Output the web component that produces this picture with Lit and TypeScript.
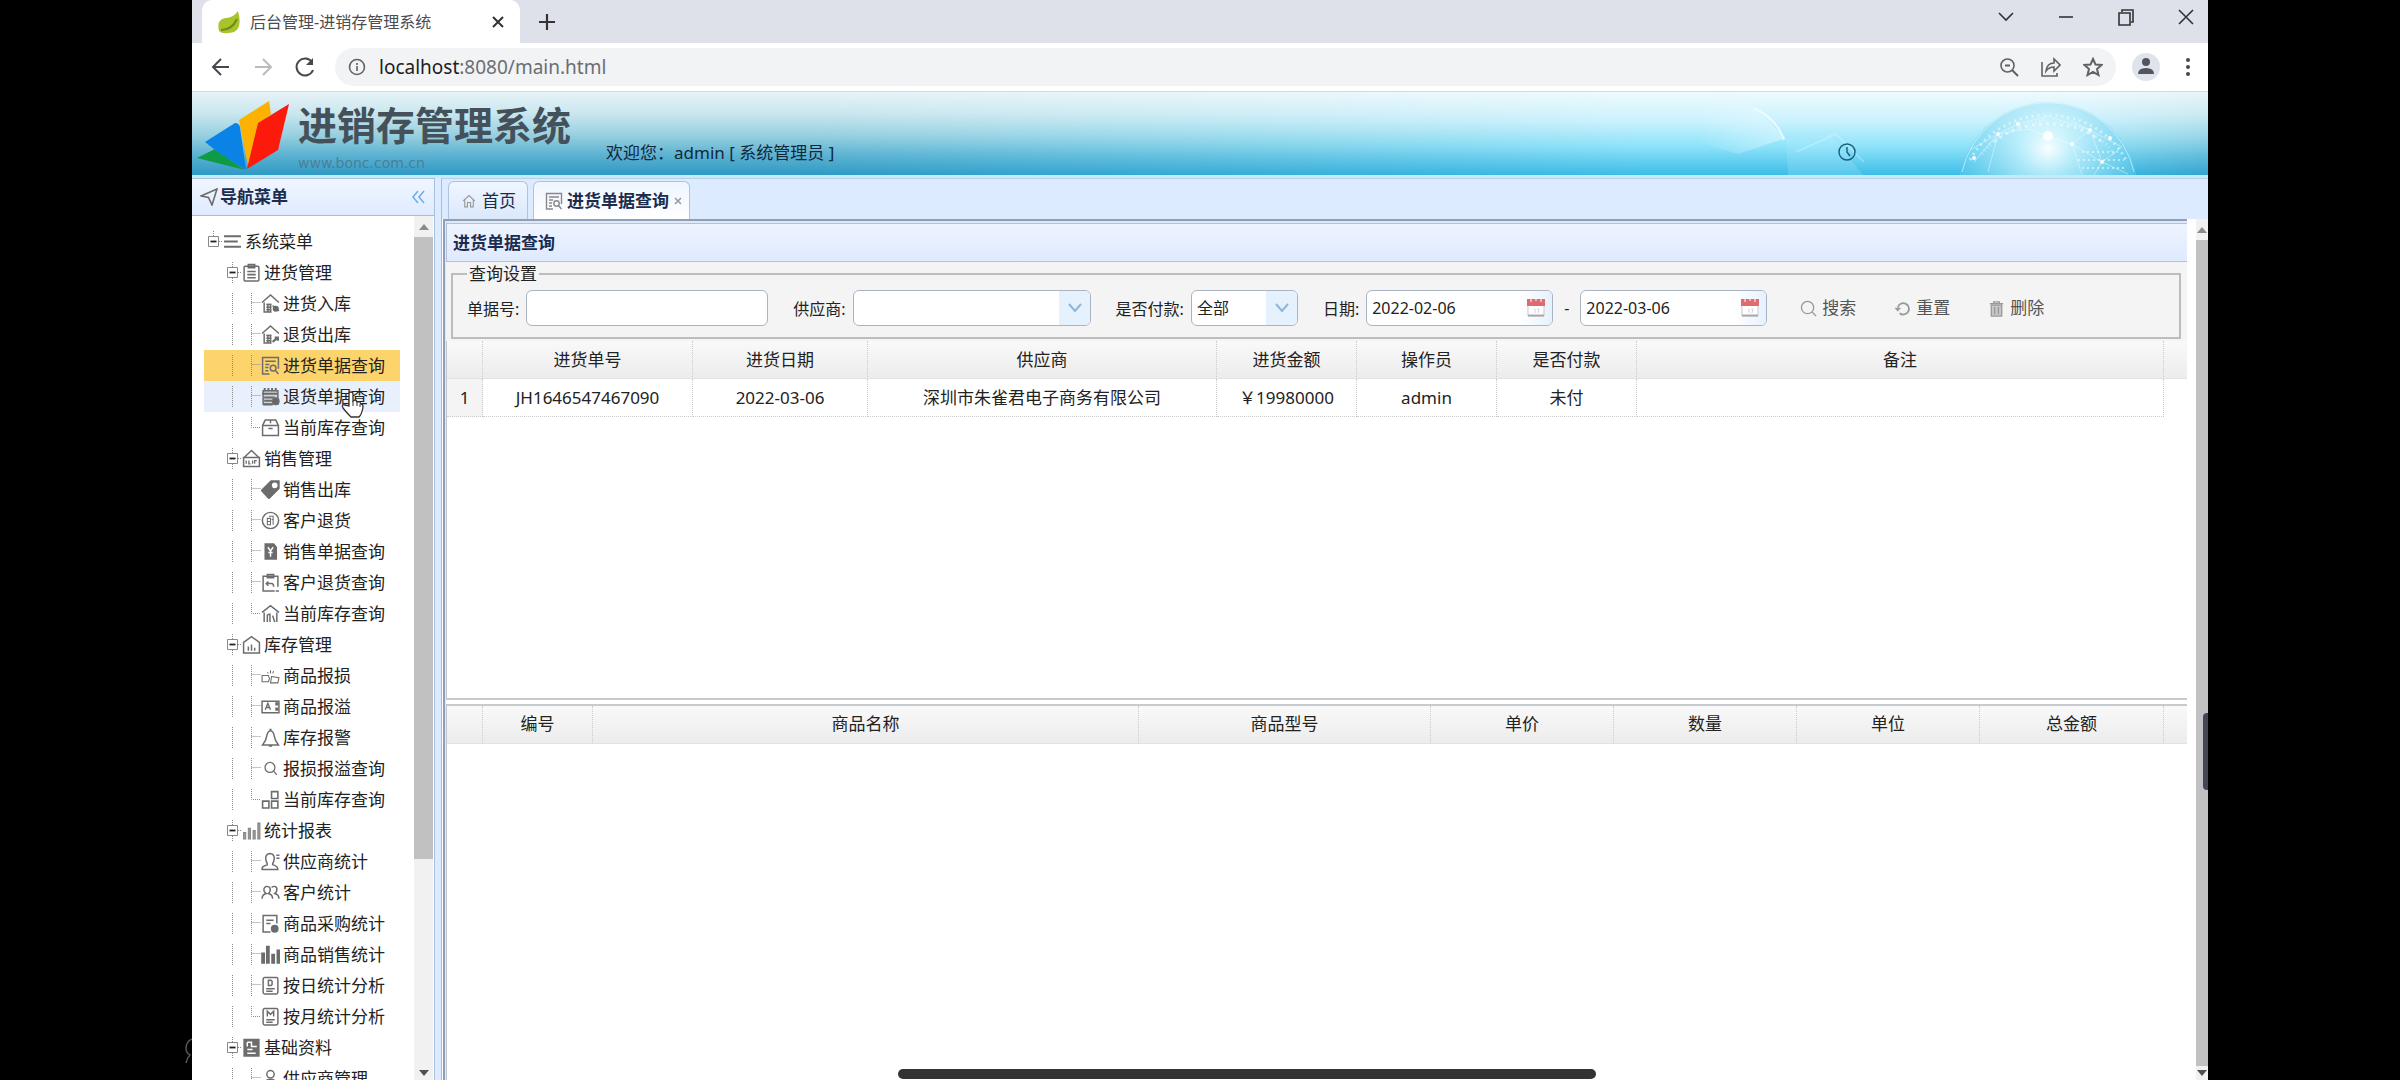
import { LitElement, html, css, svg, type TemplateResult } from "lit";
import { customElement, property, state } from "lit/decorators.js";

/* Glyphs drawn on an 18 x 18 grid; strokes use the current colour. */
const glyphs: Record<string, TemplateResult> = {
  send: svg`<path d="M1 8 L17 1 L12 17 L8.500 9.500 Z" stroke-width="1.600"/>`,
  list: svg`<path d="M1 4h16M1 9h13M1 14h16" stroke-width="1.800"/>`,
  clipboard: svg`<rect x="2" y="3" width="14" height="14" rx="1"/><path d="M6 1.500h6v3h-6zM5 8h8M5 11h8M5 14h8" stroke-width="1.500"/>`,
  houseIn: svg`<path d="M1 8 9 1l8 7M3 8v9h7M5 10h5M5 12.500h5M5 15h5M6.500 9v8M9 9v8"/><circle cx="14" cy="14" r="2.200" fill="currentColor"/><path d="m11 11 6 5"/>`,
  houseOut: svg`<path d="M1 8 9 1l8 7M3 8v9h7M5 10h5M5 12.500h5M5 15h5M6.500 9v8M9 9v8"/><path d="m11 16 5-4M13 12h3v3" stroke-width="2"/>`,
  docSearch: svg`<path d="M8 17H1.500V1.500h15V9M4 5h10M4 8h4M4 11h3M4 14h3" /><circle cx="11.500" cy="11.500" r="2.700"/><path d="m13.500 13.500 3 3.500M16.500 9v3" />`,
  calendar: svg`<path d="M2 3.500h14V16H2z" fill="currentColor" fill-opacity=".2"/><path d="M3.500 1v3M7 1v3M10.500 1v3M14 1v3M1 6.500h15M3 10h10M3 13h8M2 16.500h9" stroke-width="1.900"/><circle cx="14" cy="13.500" r="3" fill="#666"/>`,
  box: svg`<path d="M1.500 7 4 2h10l2.500 5v9.500h-15zM1.500 7h15M9 2v3M7 10h4" />`,
  saleSign: svg`<path d="M1.500 8h15v8.500h-15zM2 8l7-6.500L16 8"/><path d="M4 11v3M6.500 11v3h1.500M10 11v3M12 14v-3h2" stroke-width="1.200"/>`,
  tag: svg`<path d="M9.500 1H17v7L7.500 17.500.5 10z" fill="currentColor"/><circle cx="13" cy="5" r="2" fill="#fff" stroke="#fff"/>`,
  coin: svg`<circle cx="9" cy="9" r="7.700"/><path d="M6 7h3v6H6zM7.500 5h4v8M10 8h2M6 10h3" stroke-width="1"/>`,
  billFill: svg`<path d="M4 2h8l2.500 3v11H4z" fill="currentColor"/><path d="m6.500 5 2.500 3.500L11.500 5M9 8.500V14M7 10h4" stroke="#fff"/>`,
  boardBack: svg`<path d="M13 17H2V3h14v10M6 1.500h6v3H6zM7 8 5 10l2 2M5.500 10H10q2 0 2 3M14 17h3"/>`,
  homeBars: svg`<path d="M1 8 9 1.500 17 8M3 8v9M15 8v9M6 10v7M8.500 9v8M11 11l2 6M6 10h2.500"/>`,
  homeChart: svg`<path d="M1.500 7 9 1.500 16.500 7v10h-15zM6 11v4M9 9v6M12 12v3"/>`,
  broken: svg`<path d="M1 9h6l1 3-1 3H1zM10 10l7 1-1 5H9zM6 6l1 1M9 4v3M12 5l-1 2" stroke-width="1"/>`,
  label: svg`<path d="M1 4h16v11H1z"/><path d="m4 12 2.500-6L9 12M5 10h3" stroke-width="1.300"/><path d="M15 5v9" stroke-width="3" stroke-dasharray="3 2"/>`,
  bell: svg`<path d="M9 2.500q3 1 3.500 5 .500 4 4 8.500h-15q3.500-4.500 4-8.500Q6 3.500 9 2.500zM8 1.500h2M7.500 17h3"/>`,
  search: svg`<circle cx="8.500" cy="8" r="4.700" stroke-width="1.200"/><path d="m12 11.500 3 3.500" stroke-width="1.200"/>`,
  blocks: svg`<path d="M10 1.500h6V8h-6zM1.500 10.500h6V17h-6zM10 10.500h6V17h-6z" stroke-width="1.500"/>`,
  bars: svg`<path d="M1.500 11h2v6h-2zM6 7h2v10H6zM10.500 9h2v8h-2zM15 2h2v15h-2z" fill="#999" stroke="#888" stroke-width="1"/>`,
  person: svg`<path d="M1 16.500q-.500-3 5-4.500 0-1.500-1-3-2-7 3.500-7.500 5.500.500 3.500 7.500-1 1.500-1 3 5 1.500 5 4.500zM14.500 3h3M14.500 6h3"/>`,
  people: svg`<path d="M1 15q0-4 4-5-3-2-2-5 1.500-3 5-1 2 3-1 6 4 1 4 5M10 4q4-2 5 1 .500 3-2 5 4 1 4 5"/>`,
  docPie: svg`<path d="M9 17H2V1.500h13V9M5 6h7M5 9h4"/><circle cx="13" cy="14" r="3" fill="currentColor"/>`,
  barsFill: svg`<path d="M1 8h2v9H1zM5.500 1.500h2V17h-2zM10.500 9h2v8h-2zM15.500 5h2v12h-2z" fill="currentColor" stroke-width="1.600"/>`,
  dayDoc: svg`<rect x="2" y="1.500" width="14" height="15.500" rx="1.500"/><path d="M7 4v5h2.500l1-1V5l-1-1zM5 12h8M5 14.500h6" />`,
  monthDoc: svg`<rect x="2" y="1.500" width="14" height="15.500" rx="1.500"/><path d="M6 9V4l3 3 3-3v5M5 12h8M5 14.500h6" />`,
  ledger: svg`<path d="M2 1.500h14v15.500H2z" fill="currentColor"/><path d="M5 4h4v4h5M5 11h5M5 14.500h8M5 4v4" stroke="#fff"/>`,
  user: svg`<circle cx="9" cy="5" r="3.500"/><path d="M2 17q0-7 7-7t7 7z"/>`,
  home: svg`<path d="M1.500 9 9 2l7.500 7M3.500 8v8.500H7V11h4v5.500h3.500V8"/>`,
  reset: svg`<path d="M4 8a6 6 0 1 1 2 6" stroke-width="1.800"/><path d="M1 8.500h6L4 12z" fill="currentColor" stroke-width=".5"/>`,
  trash: svg`<path d="M2 4h14M6 4V2h6v2" /><path d="M3.500 5.500h11V17h-11z" fill="currentColor" fill-opacity=".5"/><path d="M7 7.500V15M11 7.500V15"/>`,
  finder: svg`<circle cx="8" cy="8" r="6.500"/><path d="m13 13 4 4"/>`,
  clock: svg`<circle cx="9" cy="9" r="8"/><path d="M9 4v5l3 4" />`,
};

const icon = (name: string, cls = "ico") =>
  html`<svg class=${cls} viewBox="0 0 18 18" fill="none" stroke="currentColor" stroke-width="1.400" aria-hidden="true">${glyphs[name]}</svg>`;

interface MenuGroup { label: string; icon: string; items: [string, string][] }

const menu: MenuGroup[] = [
  { label: "进货管理", icon: "clipboard", items: [["进货入库", "houseIn"], ["退货出库", "houseOut"], ["进货单据查询", "docSearch"], ["退货单据查询", "calendar"], ["当前库存查询", "box"]] },
  { label: "销售管理", icon: "saleSign", items: [["销售出库", "tag"], ["客户退货", "coin"], ["销售单据查询", "billFill"], ["客户退货查询", "boardBack"], ["当前库存查询", "homeBars"]] },
  { label: "库存管理", icon: "homeChart", items: [["商品报损", "broken"], ["商品报溢", "label"], ["库存报警", "bell"], ["报损报溢查询", "search"], ["当前库存查询", "blocks"]] },
  { label: "统计报表", icon: "bars", items: [["供应商统计", "person"], ["客户统计", "people"], ["商品采购统计", "docPie"], ["商品销售统计", "barsFill"], ["按日统计分析", "dayDoc"], ["按月统计分析", "monthDoc"]] },
  { label: "基础资料", icon: "ledger", items: [["供应商管理", "user"]] },
];

const shared = css`
  * { box-sizing: border-box; }
  button, input, select { font: inherit; color: inherit; margin: 0; }
  button { border: 0; background: none; padding: 0; display: flex; align-items: center; justify-content: center; }
  a { color: inherit; text-decoration: none; }
  svg { display: block; flex: none; }
  .ico { width: 18px; height: 18px; color: #6c6c6c; }
`;

@customElement("scroll-rail")
class ScrollRail extends LitElement {
  static styles = css`
    :host { display: flex; flex-direction: column; background: #f1f1f1; overflow: hidden; }
    .end { flex: none; height: 21px; display: flex; align-items: center; justify-content: center; }
    .end svg { width: 10px; height: 6px; flex: none; fill: #8a8a8a; }
    .end.down { height: 14px; }
    .end.down svg { fill: #505050; }
    .thumb { background: #c1c1c1; }
    .track { flex: 1; display: flex; flex-direction: column; min-height: 0; }
  `;
  @property({ type: Number }) share = 100;
  render() {
    return html`
      <div class="end"><svg viewBox="0 0 10 6"><path d="M0 6 5 0l5 6z"/></svg></div>
      <div class="track"><div class="thumb" style="height:${this.share}%"></div></div>
      <div class="end down"><svg viewBox="0 0 10 6"><path d="M0 0h10L5 6z"/></svg></div>`;
  }
}

@customElement("browser-chrome")
class BrowserChrome extends LitElement {
  static styles = [shared, css`
    :host { display: block; flex: none; color: #3c4043; font-family: "Noto Sans", "Noto Sans CJK SC", sans-serif; }
    .strip { height: 43px; background: #dee1e9; display: flex; padding-left: 10px; }
    .tab { width: 318px; background: #fff; border-radius: 10px 10px 0 0; display: flex; align-items: center; padding: 0 12px 0 15px; }
    .tab .fav { width: 24px; height: 24px; margin-right: 9px; }
    .tab .name { flex: 1; font-size: 16px; line-height: 24px; white-space: nowrap; color: #4a4c50; }
    .line { fill: none; stroke: #333; stroke-width: 1.600; width: 20px; height: 20px; }
    .plus { margin-left: 17px; }
    .win { margin-left: auto; display: flex; gap: 40px; padding: 0 12px 9px 0; align-items: center; }
    .bar { height: 49px; background: #fff; border-bottom: 1px solid #cfdcda; display: flex; align-items: center; padding: 0 10px 0 17px; }
    .nav { display: flex; gap: 18px; }
    .nav .line { width: 24px; height: 24px; stroke: #45484d; stroke-width: 2; }
    .nav .off { stroke: #bbb; }
    .omni { flex: 1; height: 38px; margin-left: 18px; border-radius: 19px; background: #f1f3f4; display: flex; align-items: center; padding: 0 13px 0 12px; }
    .omni .line { stroke: #5f6368; }
    .omni .at { margin-right: 12px; }
    .acts { display: flex; gap: 22px; }
    .ava { width: 28px; height: 28px; border-radius: 50%; background: #dfe3ec; margin: 0 18px 0 16px; overflow: hidden; }
    .more { width: 20px; height: 24px; fill: #45484d; }
    .url-box { flex: 1; font-size: 19px; line-height: 26px; }
    .url-box b { font-weight: 400; color: #202124; }
    .url-link { color: #6a6e73; }
  `];
  render() {
    return html`
      <div class="strip">
        <div class="tab">
          <svg class="fav" viewBox="0 0 24 24"><path d="M2 21Q-1 9 9 8 16 8 21 1 27 23 11 23 5 24 2 21z" fill="#a9c42b"/><path d="M4 20Q15 20 20 9" stroke="#6b8c16" stroke-width="2" fill="none"/></svg>
          <span class="name">后台管理-进销存管理系统</span>
          <button aria-label="关闭标签页"><svg class="line" viewBox="0 0 20 20"><path d="m5 5 10 10M15 5 5 15" stroke-width="2"/></svg></button>
        </div>
        <button class="plus" aria-label="新标签页"><svg class="line" viewBox="0 0 20 20"><path d="M10 2v16M2 10h16" stroke-width="2.200"/></svg></button>
        <div class="win">
          <button aria-label="搜索标签页"><svg class="line" viewBox="0 0 20 20"><path d="m3 6 7 7 7-7"/></svg></button>
          <button aria-label="最小化"><svg class="line" viewBox="0 0 20 20"><path d="M3 10h14"/></svg></button>
          <button aria-label="还原"><svg class="line" viewBox="0 0 20 20"><path d="M3 6h11v12H3zM6 5V3h11v12h-2"/></svg></button>
          <button aria-label="关闭"><svg class="line" viewBox="0 0 20 20"><path d="m3 3 14 14M17 3 3 17"/></svg></button>
        </div>
      </div>
      <div class="bar">
        <div class="nav">
          <button aria-label="后退"><svg class="line" viewBox="0 0 24 24"><path d="M20 12H5M12 4l-8 8 8 8"/></svg></button>
          <button aria-label="前进"><svg class="line off" viewBox="0 0 24 24"><path d="M4 12h15M12 4l8 8-8 8"/></svg></button>
          <button aria-label="刷新"><svg class="line" viewBox="0 0 24 24"><path d="M19 7a8.500 8.500 0 1 0 1 8"/><path d="M20 3v7h-7z" fill="#45484d" stroke="none"/></svg></button>
        </div>
        <div class="omni">
          <svg class="line at" viewBox="0 0 20 20"><circle cx="10" cy="10" r="7.500"/><path d="M10 9v5M10 6v2"/></svg>
          <div class="url-box"><a class="url-link" href="#"><b>localhost</b>:8080/main.html</a></div>
          <div class="acts">
            <button aria-label="缩放"><svg class="line" viewBox="0 0 20 20"><circle cx="8.500" cy="8.500" r="6.500"/><path d="m13 13 6 6M6 8.500h5" stroke-width="2"/></svg></button>
            <button aria-label="分享"><svg class="line" viewBox="0 0 20 20"><path d="M1 5v14h15v-3M5 14q1-8 8-8V2l6 6-6 6v-4q-5 0-8 4z"/></svg></button>
            <button aria-label="收藏"><svg class="line" viewBox="0 0 20 20"><path d="m10 2 2.500 5.500 6 .5-4.500 4 1.500 6-5.500-3.200L4.500 18 6 12 1.500 8l6-.5z" stroke-width="2"/></svg></button>
          </div>
        </div>
        <button class="ava" aria-label="用户"><svg viewBox="0 0 28 28" width="28" height="28" fill="#50555e"><circle cx="14" cy="9" r="4"/><path d="M6 21q0-6 8-6t8 6z"/></svg></button>
        <button aria-label="更多"><svg class="more" viewBox="0 0 20 24"><circle cx="10" cy="5" r="2"/><circle cx="10" cy="12" r="2"/><circle cx="10" cy="19" r="2"/></svg></button>
      </div>`;
  }
}

@customElement("app-banner")
class AppBanner extends LitElement {
  static styles = [shared, css`
    :host { display: flex; flex: none; height: 86px; position: relative; overflow: hidden; align-items: flex-start;
      border-bottom: 3px solid #c2edf6; padding-left: 5px;
      background: linear-gradient(#e6f3f7, #cbe7ef 25%, #98d0e0 52%, #5cb2d1 76%, #2f99c4); }
    .glow { position: absolute; inset: 0 0 0 30%; width: 70%; height: 100%;
      background: linear-gradient(#eefafd, #caf2fd 35%, #8fe3fa 65%, #3dbde8);
      mask-image: linear-gradient(90deg, transparent, #000 60%, #000 90%, rgba(0,0,0,.3)); }
    .globe { position: absolute; right: 0; top: 0; width: 510px; height: 83px; }
    .logo { width: 93px; height: 70px; margin-top: 8px; position: relative; }
    .brand { margin: 11px 0 0 8px; position: relative; width: 308px; }
    h1 { margin: 0; font: 700 39px/40px "Noto Sans CJK SC", sans-serif; color: #45515a; white-space: nowrap; }
    .site { font: 14px/18px "DejaVu Sans", sans-serif; color: #4a8098; margin-top: 11px; }
    .hello { margin-top: 49px; font-size: 17px; line-height: 24px; color: #12283a; flex: 1; position: relative; }
    .clock { position: relative; margin: 51px 352px 0 0; width: 18px; height: 18px; color: #195d78; }
  `];
  render() {
    return html`
      <div class="glow"></div>
      <svg class="globe" viewBox="0 0 510 83" preserveAspectRatio="xMaxYMin slice">
        <defs>
          <radialGradient id="core" cx=".5" cy=".26" r=".5"><stop offset="0" stop-color="#fff" stop-opacity=".95"/><stop offset=".25" stop-color="#d2f5fd" stop-opacity=".8"/><stop offset="1" stop-color="#5ccaec" stop-opacity=".55"/></radialGradient>
          <linearGradient id="beam" x1="0" y1="0" x2="1" y2="0"><stop offset="0" stop-color="#e8fbff" stop-opacity=".0"/><stop offset="1" stop-color="#e8fbff" stop-opacity=".5"/></linearGradient>
        </defs>
        <path d="M0 0h40l48 46L40 62 0 50z" fill="url(#beam)"/>
        <path d="M88 46l45-4 32 41H90z" fill="#bdf1fd" fill-opacity=".2"/>
        <path d="M56 16q24 12 30 32" stroke="#f2fdff" stroke-opacity=".8" stroke-width="2" fill="none"/>
        <path d="m98 60 40-18 28 28" stroke="#e6fbff" stroke-opacity=".35" stroke-width="1.500" fill="none"/>
        <circle cx="350" cy="100" r="90" fill="url(#core)"/>
        <g fill="none" stroke="#f2fdff" stroke-opacity=".55">
          <path d="M272 58 300 42 320 32 350 24 392 38 424 55M276 70l24-28 30-5 20-13M300 42l-10 38M368 26l24 12 12 32 26 12M392 38l-18 14 30 18M404 70l20-15M330 37l44 15M374 52l10 31M404 70l-8 13" stroke-opacity=".45"/>
          <path d="M264 80a88 88 0 0 1 172 0"/>
          <path d="M272 68a88 84 0 0 1 156 0" stroke-dasharray="2 4" stroke-width="3"/>
          <path d="M284 62a80 76 0 0 1 132 0" stroke-dasharray="1 3" stroke-width="4" stroke-opacity=".4"/>
          <path d="M296 50a70 50 0 0 1 108 0" stroke-dasharray="3 4" stroke-width="3"/>
          <path d="M300 12a100 100 0 0 1 100 0" stroke-dasharray="1 4" stroke-width="6" stroke-opacity=".3"/>
          <path d="M384 60h36M380 68h46M384 76h44" stroke-dasharray="2 3" stroke-width="2"/>
        </g>
        <g fill="#fff" fill-opacity=".9"><circle cx="300" cy="42" r="2"/><circle cx="320" cy="32" r="2"/><circle cx="350" cy="44" r="5"/><circle cx="392" cy="38" r="2"/><circle cx="404" cy="70" r="2"/><circle cx="374" cy="52" r="2"/><circle cx="276" cy="66" r="2"/><circle cx="412" cy="46" r="2"/></g>
      </svg>
      <svg class="logo" viewBox="0 0 93 70">
        <path d="M0 58 18 49 48 70z" fill="#0f9a45"/>
        <path d="M8 42 38 23q4 0 5 4l6 43L18 50z" fill="#0b83e6"/>
        <path d="M42 20 72 1 74 14 61 25 51 66z" fill="#fdb100"/>
        <path d="M61 23 92 4 81 50 50 69z" fill="#fb1a0b"/>
      </svg>
      <div class="brand"><h1>进销存管理系统</h1><div class="site">www.bonc.com.cn</div></div>
      <div class="hello">欢迎您：admin [ 系统管理员 ]</div>
      ${icon("clock", "clock")}`;
  }
}

@customElement("nav-tree")
class NavTree extends LitElement {
  static styles = [shared, css`
    :host { display: flex; flex-direction: column; width: 243px; flex: none; border: 1px solid #a9c1dc; border-width: 1px 1px 0 0; background: #fff; }
    header { height: 37px; flex: none; display: flex; align-items: center; gap: 2px; padding: 0 8px; background: linear-gradient(#f0f6ff, #dfebff); border-bottom: 1px solid #a9bbd6; }
    h2 { margin: 0; font-size: 17px; line-height: 24px; color: #1b2c4f; flex: 1; }
    .fold { width: 16px; height: 16px; fill: none; stroke: #6fb0e4; stroke-width: 1.600; }
    .body { flex: 1; min-height: 0; display: flex; }
    ul { list-style: none; margin: 0; padding: 0; }
    .root { flex: 1; overflow: hidden; padding: 10px 14px 0 12px; }
    a { display: flex; align-items: center; height: 31px; font-size: 17px; line-height: 24px; color: #222; white-space: nowrap; }
    a .ico { width: 19px; height: 19px; margin-right: 3px; }
    a.on { background: #fdd36b; }
    a.over { background: #e8f0fd; }
    .cell { width: 19px; height: 31px; stroke: #8a8a8a; fill: none; stroke-dasharray: 1 1; }
    .solid { stroke-dasharray: none; }
    scroll-rail { width: 19px; margin-right: 1px; }
  `];
  private blank = html`<svg class="cell" viewBox="0 0 19 31"></svg>`;
  private pipe = html`<svg class="cell" viewBox="0 0 19 31"><path d="M9.500 5v21"/></svg>`;
  private join(last: boolean) {
    return html`<svg class="cell" viewBox="0 0 19 31"><path d=${last ? "M9.500 5v10.500h9.500" : "M9.500 5v21M9.500 14.500h9.500"}/></svg>`;
  }
  private toggle(top: boolean) {
    return html`<svg class="cell" viewBox="0 0 19 31"><path d=${top ? "M9.500 5v5" : "M9.500 5v21"}/><path d="M15 15.500h4"/><g class="solid" stroke="#888"><path d="M4.500 10.500h10v10h-10z" fill="#fff"/><path d="M6.500 15.500h6" stroke="#222" stroke-width="1.800"/></g></svg>`;
  }
  render() {
    return html`
      <header>${icon("send")}<h2>导航菜单</h2><button aria-label="收起菜单"><svg class="fold" viewBox="0 0 16 16"><path d="M8 2 3 8l5 6M14 2 9 8l5 6"/></svg></button></header>
      <div class="body">
        <ul class="root">
          <li><a href="#">${this.toggle(true)}${icon("list")}系统菜单</a>
            <ul>${menu.map((g) => html`
              <li><a href="#">${this.blank}${this.toggle(false)}${icon(g.icon)}${g.label}</a>
                <ul>${g.items.map(([label, ic], i) => html`
                  <li><a href="#" class=${label === "进货单据查询" ? "on" : label === "退货单据查询" ? "over" : ""}>
                    ${this.blank}${this.pipe}${this.join(i === g.items.length - 1 && g.items.length > 1)}${icon(ic)}${label}</a></li>`)}
                </ul>
              </li>`)}
            </ul>
          </li>
        </ul>
        <scroll-rail share="75"></scroll-rail>
      </div>`;
  }
}

interface Column { title: string; width?: number }

@customElement("data-grid")
class DataGrid extends LitElement {
  static styles = [shared, css`
    :host { display: block; background: #fff; overflow: hidden; }
    table { width: 100%; table-layout: fixed; border-collapse: separate; border-spacing: 0; font-size: 17px; line-height: 24px; color: #222; }
    th { height: 38px; padding: 0; font-weight: 400; background: linear-gradient(#f9f9fa, #ececec); border-right: 1px dotted #ccc; border-bottom: 1px solid #e2e2e2; }
    td { height: 38px; padding: 0; text-align: center; border-right: 1px dotted #ccc; border-bottom: 1px dotted #ccc; white-space: nowrap; }
    td:first-child { background: #f4f4f4; }
    th:last-child, td:last-child { border-right: 0; }
    td:last-child { border-bottom: 0; }
  `];
  @property({ attribute: false }) columns: Column[] = [];
  @property({ attribute: false }) rows: string[][] = [];
  render() {
    return html`<table>
      <colgroup>
        <col style="width:36px">
        ${this.columns.map((c) => (c.width ? html`<col style="width:${c.width}px">` : html`<col>`))}
        <col style="width:23px">
      </colgroup>
      <thead><tr><th></th>${this.columns.map((c) => html`<th scope="col">${c.title}</th>`)}<th></th></tr></thead>
      <tbody>${this.rows.map((r, i) => html`<tr><td>${i + 1}</td>${r.map((v) => html`<td>${v}</td>`)}<td></td></tr>`)}</tbody>
    </table>`;
  }
}

@customElement("query-form")
class QueryForm extends LitElement {
  static styles = [shared, css`
    :host { display: block; flex: none; background: #f4f4f5; padding: 2px 6px 2px 5px; font-size: 16px; color: #222; }
    fieldset { margin: 0; min-width: 0; border: 2px solid #bcbdbf; padding: 6px 14px 11px; }
    legend { font-size: 17px; line-height: 20px; padding: 0 2px; }
    .row { display: flex; align-items: center; gap: 25px; }
    .field { display: flex; align-items: center; gap: 7px; white-space: nowrap; }
    .box { height: 36px; border: 1px solid #aab3c2; border-radius: 6px; background: #fff; display: grid; align-items: center; overflow: hidden; }
    .box > * { grid-area: 1 / 1; }
    .box input, .box select { width: 100%; height: 34px; border: 0; outline: 0; background: none; padding: 0 5px; appearance: none; border-radius: 0; }
    .no { width: 242px; }
    .supplier { width: 238px; }
    .paid { width: 107px; }
    .date { width: 187px; }
    .drop { justify-self: end; width: 31px; height: 34px; background: #e6f1fe; pointer-events: none; fill: none; stroke: #8db6d8; stroke-width: 2; }
    .cal { justify-self: end; width: 32px; height: 34px; background: linear-gradient(90deg, #fff, #e6f1fe); }
    .tools { display: flex; gap: 22px; }
    .tools button { gap: 5px; padding: 0 8px; font-size: 17px; line-height: 24px; color: #555; }
    .tools .ico { width: 17px; height: 17px; color: #999; }
    .date-box { display: flex; align-items: center; gap: 11px; }
  `];
  private cal = html`<svg width="18" height="20" viewBox="0 0 18 20"><path d="M1 3h16v15H1z" fill="#fff" stroke="#c9c9d0"/><path d="M1 17.500h16" stroke="#aaa" stroke-width="2"/><path d="M0 1h18v7H0z" fill="#dd6b70"/><path d="M4 0v4M9 0v3M14 0v4" stroke="#fff"/><path d="M7 11h1v4M10 11h2l-1 4" stroke="#d8d0d8" fill="none"/></svg>`;
  private arrow = html`<svg class="drop" viewBox="0 0 31 34"><path d="m10 13 6 7 6-7"/></svg>`;
  render() {
    return html`<fieldset>
      <legend>查询设置</legend>
      <div class="row">
        <div class="field"><label for="no">单据号:</label><div class="box no"><input id="no" type="text"></div></div>
        <div class="field"><label for="supplier">供应商:</label><div class="box supplier"><select id="supplier"><option></option></select>${this.arrow}</div></div>
        <div class="field"><label for="paid">是否付款:</label><div class="box paid"><select id="paid"><option>全部</option></select>${this.arrow}</div></div>
        <div class="field">
          <label for="from">日期:</label>
          <div class="date-box">
            <div class="box date"><input id="from" type="text" value="2022-02-06"><button class="cal" aria-label="选择开始日期">${this.cal}</button></div>
            <span>-</span>
            <div class="box date"><input id="to" type="text" aria-label="结束日期" value="2022-03-06"><button class="cal" aria-label="选择结束日期">${this.cal}</button></div>
          </div>
        </div>
        <div class="tools">
          <button>${icon("finder")}搜索</button>
          <button>${icon("reset")}重置</button>
          <button>${icon("trash")}删除</button>
        </div>
      </div>
    </fieldset>`;
  }
}

@customElement("work-area")
class WorkArea extends LitElement {
  static styles = [shared, css`
    :host { display: flex; flex-direction: column; flex: 1; min-width: 0; border-left: 1px solid #a9bbd6; border-top: 1px solid #b9cfe6; }
    .tabs { height: 40px; flex: none; display: flex; align-items: flex-end; gap: 5px; padding-left: 6px; }
    .tab { height: 38px; border: 1px solid #afc3dc; border-bottom: 0; border-radius: 6px 6px 0 0; display: flex; align-items: center; gap: 6px; padding: 0 11px 0 13px; font-size: 17px; line-height: 24px; color: #1b2c4f; background: linear-gradient(#eff6ff, #dbe8fb); }
    .tab.on { font-weight: 700; background: linear-gradient(#eff6ff, #fff); gap: 4px; padding: 0 6px 0 11px; }
    .tab .ico { color: #888; }
    .tab .small { width: 14px; height: 16px; color: #999; }
    .tab .x { width: 10px; height: 10px; fill: none; stroke: #999; stroke-width: 1.500; }
    .stage { flex: 1; min-height: 0; display: flex; background: #fff; }
    .panel { flex: 1; min-width: 0; display: flex; flex-direction: column; margin-left: 1px; border: 2px solid #8e9fb9; border-width: 2px 0 0 2px; padding: 2px 0 0 1px; background: #dfe9f6; }
    h2 { margin: 0; flex: none; height: 39px; padding: 0 6px; font-size: 17px; line-height: 37px; color: #1b2c4f; border: 1px solid #b4c2d8; border-right: 0; background: linear-gradient(#eef4ff, #dfeaff); }
    .split { flex: 1; min-height: 0; display: flex; flex-direction: column; gap: 4px; background: #fff; }
    data-grid { border-left: 1px solid #c3c8d0; }
    .top { flex: 359 1 0; min-height: 0; border-bottom: 2px solid #c6c9cd; }
    .bottom { flex: 377 1 0; min-height: 0; border-top: 2px solid #c6cbcf; }
    scroll-rail { width: 12px; margin-left: 9px; }
  `];
  @state() private orders = [["JH1646547467090", "2022-03-06", "深圳市朱雀君电子商务有限公司", "￥19980000", "admin", "未付", ""]];
  private orderCols: Column[] = [
    { title: "进货单号", width: 210 }, { title: "进货日期", width: 175 }, { title: "供应商", width: 349 },
    { title: "进货金额", width: 140 }, { title: "操作员", width: 140 }, { title: "是否付款", width: 140 }, { title: "备注" },
  ];
  private goodsCols: Column[] = [
    { title: "编号", width: 110 }, { title: "商品名称" }, { title: "商品型号", width: 292 },
    { title: "单价", width: 183 }, { title: "数量", width: 183 }, { title: "单位", width: 183 }, { title: "总金额", width: 184 },
  ];
  render() {
    return html`
      <div class="tabs">
        <button class="tab">${icon("home", "ico small")}首页</button>
        <div class="tab on">${icon("docSearch")}进货单据查询<button aria-label="关闭"><svg class="x" viewBox="0 0 10 10"><path d="m2 2 6 6M8 2 2 8"/></svg></button></div>
      </div>
      <div class="stage">
        <div class="panel">
          <h2>进货单据查询</h2>
          <query-form></query-form>
          <div class="split">
            <data-grid class="top" .columns=${this.orderCols} .rows=${this.orders}></data-grid>
            <data-grid class="bottom" .columns=${this.goodsCols}></data-grid>
          </div>
        </div>
        <scroll-rail share="100"></scroll-rail>
      </div>`;
  }
}

@customElement("app-root")
class AppRoot extends LitElement {
  static styles = [shared, css`
    :host { display: block; position: relative; height: 100vh; overflow: hidden; background: #000; font-family: "Noto Sans", "Noto Sans CJK SC", sans-serif; }
    .window { width: 84%; height: 100%; margin: 0 auto; display: flex; flex-direction: column; background: #dcebff; position: relative; overflow: hidden; }
    .work { flex: 1; min-height: 0; display: flex; gap: 6px; }
    .hand { position: absolute; left: 148px; top: 391px; width: 24px; height: 28px; }
    .side { position: absolute; right: 0; top: 713px; width: 5px; height: 77px; border-radius: 4px 0 0 4px; background: #454653; }
    .home { position: absolute; left: 0; right: 0; bottom: 1px; display: flex; justify-content: center; padding-left: 94px; pointer-events: none; }
    .home span { width: 698px; height: 10px; border-radius: 5px; background: #333; }
    .arc { position: absolute; left: 185px; bottom: 16px; width: 7px; height: 26px; }
  `];
  render() {
    return html`
      <div class="window">
        <browser-chrome></browser-chrome>
        <app-banner></app-banner>
        <div class="work"><nav-tree></nav-tree><work-area></work-area></div>
        <svg class="hand" viewBox="0 0 24 28"><path d="M9 15V3q0-2 2-2t2 2v7q3-2 4 1 3-1 4 2 2 0 2 3-1 7-4 10H11Q6 21 3 17q-2-4 2-3z" fill="#fff" stroke="#333" stroke-width="1.300"/><path d="M13 10v5M17 11v4M20 13v3" stroke="#333" fill="none"/></svg>
        <div class="side"></div>
      </div>
      <svg class="arc" viewBox="0 0 7 26"><path d="M7 1Q1 4 1 10q0 5 4 7-3 3-4 8" fill="none" stroke="#555" stroke-width="1.500"/></svg>
      <div class="home"><span></span></div>`;
  }
}
